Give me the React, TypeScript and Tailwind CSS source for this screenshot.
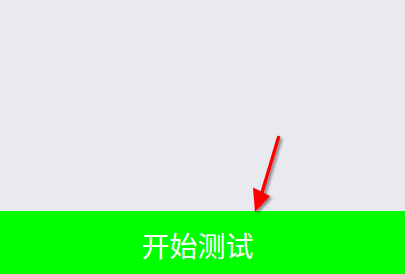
export default function App() {
  return (
    <div className="relative flex h-[274px] w-[405px] flex-col bg-[#e9eaf0] font-['Noto_Sans_CJK_SC',sans-serif]">
      <div className="flex-1" />
      <button className="flex h-[63px] w-full items-center justify-center bg-[#00ff00] pr-[10px] pt-[4px] text-[28px] text-white">
        开始测试
      </button>

      {/* annotation arrow */}
      <svg className="absolute left-0 top-0" width="405" height="274" viewBox="0 0 405 274">
        <defs>
          <filter id="sh" x="-50%" y="-50%" width="200%" height="200%">
            <feDropShadow dx="2" dy="2" stdDeviation="1.5" floodColor="#000" floodOpacity="0.45" />
          </filter>
        </defs>
        <g filter="url(#sh)">
          <line x1="278.5" y1="137.5" x2="261" y2="196" stroke="#ff0000" strokeWidth="3.4" strokeLinecap="round" />
          <polygon points="255,212 253,187.5 270,196" fill="#ff0000" />
        </g>
      </svg>
    </div>
  );
}
